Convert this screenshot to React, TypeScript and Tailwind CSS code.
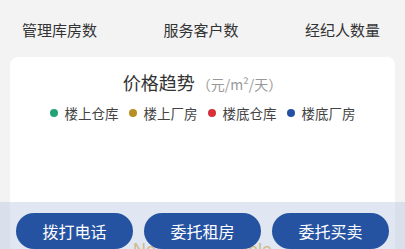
const stats = ['管理库房数', '服务客户数', '经纪人数量'];

const legend = [
  { label: '楼上仓库', color: 'bg-[#23a275]' },
  { label: '楼上厂房', color: 'bg-[#b88f25]' },
  { label: '楼底仓库', color: 'bg-[#d8303a]' },
  { label: '楼底厂房', color: 'bg-[#2450a3]' },
];

const actions = ['拨打电话', '委托租房', '委托买卖'];

export default function App() {
  return (
    <div
      className="relative h-[249px] w-full overflow-hidden bg-[#f3f3f3]"
      style={{ fontFamily: '"Noto Sans CJK SC", "Noto Sans", "Liberation Sans", sans-serif' }}
    >
      {/* stats labels */}
      <div className="flex justify-between pl-[22px] pr-[25px] pt-[20px] text-[15px] leading-[20px] text-[#333]">
        {stats.map((s) => (
          <span key={s}>{s}</span>
        ))}
      </div>

      {/* price trend card */}
      <div className="mx-[10px] mt-[17px] rounded-lg bg-white pt-[14px]">
        <div className="flex items-baseline justify-center">
          <span className="text-[18px] leading-[22px] text-[#333]">价格趋势</span>
          <span className="ml-[2px] text-[14px] text-[#999]">（元/m²/天）</span>
        </div>
        <div className="mt-[8px] flex items-center justify-center gap-[10px] text-[13.5px] leading-[20px] text-[#444]">
          {legend.map((l) => (
            <div key={l.label} className="flex items-center gap-[7px]">
              <span className={`h-[8px] w-[8px] rounded-full ${l.color}`} />
              <span>{l.label}</span>
            </div>
          ))}
        </div>
        <div className="h-[160px] pt-[114px] text-center">
          <span
            className="text-[18px] leading-none text-[#e6b44a]"
            style={{ fontFamily: '"Liberation Sans", Arial, sans-serif' }}
          >
            No data available
          </span>
        </div>
      </div>

      {/* bottom action bar */}
      <div className="absolute left-0 right-0 top-[202px] h-[60px] bg-[rgba(181,198,224,0.42)] px-[16px] pt-[11px]">
        <div className="grid grid-cols-3 gap-[11px]">
          {actions.map((a) => (
            <button
              key={a}
              className="h-[36px] rounded-full bg-[#2553a1] text-[16px] text-white"
            >
              {a}
            </button>
          ))}
        </div>
      </div>
    </div>
  );
}
